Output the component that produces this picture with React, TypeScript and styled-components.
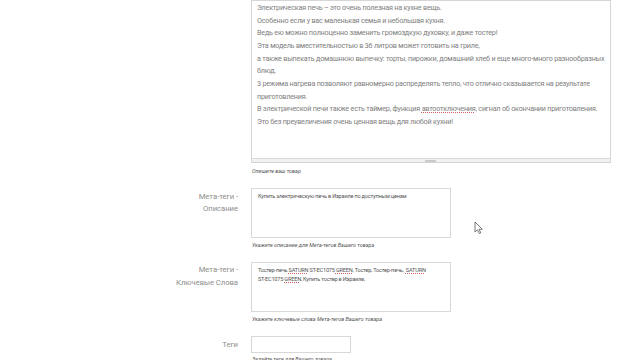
import React from 'react';
import styled, {createGlobalStyle} from 'styled-components';

const Global = createGlobalStyle`
    html, body {
        margin:0;
        padding:0;
        background:#fff;
        overflow:hidden;
    }
    body {
        font-family:Roboto, "Liberation Sans", sans-serif;
        width:640px;
        height:360px;
    }
`;

const Page = styled.div`
    position:relative;
    width:640px;
    height:360px;
    overflow:hidden;
`;

const Form = styled.div`
    display:flex;
    flex-direction:column;
    gap:13px;
`;

const Row = styled.div`
    display:grid;
    grid-template-columns:238px 1fr;
    column-gap:13px;
`;

const Label = styled.div<{pt:number; lh:number}>`
    text-align:right;
    color:#8e8e8e;
    font-size:7.7px;
    letter-spacing:-0.05px;
    line-height:${({lh})=>lh}px;
    padding-top:${({pt})=>pt}px;
    white-space:nowrap;
`;

const Field = styled.div`
    display:flex;
    flex-direction:column;
    align-items:flex-start;
`;

const BigBox = styled.div`
    width:360px;
    box-sizing:border-box;
    border:1px solid #d6d6d6;
    border-bottom:none;
    display:flex;
    flex-direction:column;
`;

const BigText = styled.div`
    height:156px;
    padding:1px 5px 0 5px;
    color:#808080;
    font-size:7.2px;
    letter-spacing:-0.2px;
    line-height:12.65px;
    white-space:nowrap;
`;

const Grip = styled.div`
    height:3px;
    background:#f2f2f2;
    border-top:1px solid #dadada;
    border-bottom:1px solid #d4d4d4;
    display:flex;
    justify-content:center;
    align-items:center;
    & > span {
        width:11px;
        height:2px;
        background:#cacaca;
        margin-left:-2px;
    }
`;

const SmallBox = styled.div<{w:number; h:number; pt:number}>`
    width:${({w})=>w}px;
    height:${({h})=>h}px;
    box-sizing:border-box;
    border:1px solid #d8d8d8;
    padding:${({pt})=>pt}px 6px 0 6px;
    color:#555;
    font-size:5.6px;
    letter-spacing:-0.2px;
    line-height:9px;
    white-space:nowrap;
`;

const Hint = styled.div<{mt:number}>`
    margin-top:${({mt})=>mt}px;
    font-size:5.4px;
    line-height:8px;
    color:#555;
    font-style:italic;
    padding-left:1px;
    white-space:nowrap;
`;

const Spell = styled.span`
    text-decoration:underline dotted #d06060;
    text-decoration-thickness:1px;
    text-underline-offset:1px;
`;

const Cursor = styled.svg`
    position:absolute;
    left:474px;
    top:221px;
`;

const description = [
    'Электрическая печь – это очень полезная на кухне вещь.',
    'Особенно если у вас маленькая семья и небольшая кухня.',
    'Ведь ею можно полноценно заменить громоздкую духовку, и даже тостер!',
    'Эта модель вместительностью в 36 литров может готовить на гриле,',
    'а также выпекать домашнюю выпечку: торты, пирожки, домашний хлеб и еще много-много разнообразных',
    'блюд.',
    '3 режима нагрева позволяют равномерно распределять тепло, что отлично сказывается на результате',
    'приготовления.',
];

const App: React.FC = () => {
    return <Page>
        <Global />
        <Form>
            <Row>
                <div />
                <Field>
                    <BigBox>
                        <BigText>
                            {description.map((l, i) => <div key={i}>{l}</div>)}
                            <div>В электрической печи также есть таймер, функция <Spell>автоотключения</Spell>, сигнал об окончании приготовления.</div>
                            <div>Это без преувеличения очень ценная вещь для любой кухни!</div>
                        </BigText>
                        <Grip><span /></Grip>
                    </BigBox>
                    <Hint mt={4}>Опишите ваш товар</Hint>
                </Field>
            </Row>
            <Row>
                <Label pt={3} lh={12}>Мета-теги -<br />Описание</Label>
                <Field>
                    <SmallBox w={200} h={50} pt={3}>Купить электрическую печь в Израиле по доступным ценам</SmallBox>
                    <Hint mt={3}>Укажите описание для Мета-тегов Вашего товара</Hint>
                </Field>
            </Row>
            <Row>
                <Label pt={2} lh={12.6}>Мета-теги -<br />Ключевые Слова</Label>
                <Field>
                    <SmallBox w={200} h={50} pt={3}>
                        Тостер-печь <Spell>SATURN</Spell> ST-EC1075 <Spell>GREEN</Spell>, Тостер, Тостер-печь,&nbsp; <Spell>SATURN</Spell><br />
                        ST-EC1075 <Spell>GREEN</Spell>, Купить тостер в Израиле,
                    </SmallBox>
                    <Hint mt={3}>Укажите ключевые слова Мета-тегов Вашего товара</Hint>
                </Field>
            </Row>
            <Row>
                <Label pt={3} lh={12}>Теги</Label>
                <Field>
                    <SmallBox w={100} h={17} pt={0} />
                    <Hint mt={2}>Задайте теги для Вашего товара</Hint>
                </Field>
            </Row>
        </Form>
        <Cursor width="10" height="14" viewBox="0 0 10 14">
            <path d="M1 1 L1 11 L3.5 8.8 L5.3 12.6 L6.8 11.9 L5.1 8.3 L8.3 8.2 Z" fill="#fff" stroke="#555" strokeWidth="0.8" strokeLinejoin="round" />
        </Cursor>
    </Page>;
}

export default App;
